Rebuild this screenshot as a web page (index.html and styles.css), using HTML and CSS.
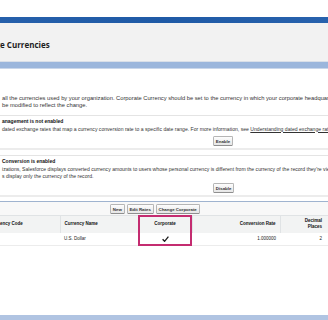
FILE: index.html
```html
<!DOCTYPE html>
<html>
  <head>
    <title>Manage Currencies</title>
    <meta name="viewport" content="width=device-width, initial-scale=1" />
    <link rel="stylesheet" href="styles.css">
  </head>
  <body>
    <div class="page">
      <div class="top-band"></div>
      <div class="title-bar">
        <h1>Manage Currencies</h1>
      </div>
      <div class="low-band"></div>

      <p class="intro">
        all the currencies used by your organization. Corporate Currency should be set to the currency in which your corporate headquarters reports revenue. If your corporate currency changes, the exchange rates should<br />
        be modified to reflect the change.
      </p>

      <div class="section">
        <h2>anagement is not enabled</h2>
        <p>dated exchange rates that map a currency conversion rate to a specific date range. For more information, see <a href="#">Understanding dated exchange rates</a>.</p>
        <div class="actions"><button class="btn">Enable</button></div>
      </div>

      <div class="section">
        <h2>Conversion is enabled</h2>
        <p>izations, Salesforce displays converted currency amounts to users whose personal currency is different from the currency of the record they're viewing.<br />
        s display only the currency of the record.</p>
        <div class="actions"><button class="btn">Disable</button></div>
      </div>

      <div class="list">
        <div class="list-buttons">
          <button class="btn">New</button>
          <button class="btn">Edit Rates</button>
          <button class="btn">Change Corporate</button>
        </div>
        <table>
          <thead>
            <tr>
              <th class="col-code">ency Code</th>
              <th class="col-name">Currency Name</th>
              <th class="col-corp">Corporate</th>
              <th class="col-rate">Conversion Rate</th>
              <th class="col-dec">Decimal<br />Places</th>
            </tr>
          </thead>
          <tbody>
            <tr>
              <td class="col-code"></td>
              <td class="col-name">U.S. Dollar</td>
              <td class="col-corp">
                <svg class="check" width="7" height="6" viewBox="0 0 7 6"><path d="M0.6 3.2 L2.6 5.3 L6.4 0.6" fill="none" stroke="#1a1a1a" stroke-width="1.3"/></svg>
              </td>
              <td class="col-rate">1.000000</td>
              <td class="col-dec">2</td>
            </tr>
          </tbody>
        </table>
        <div class="highlight"></div>
      </div>

      <div class="bottom-band"></div>
    </div>
  </body>
</html>
```

FILE: styles.css
```css
body {
  margin: 0;
  padding: 0;
  background: #fff;
  color: #222;
  font-family: "Liberation Sans", Arial, sans-serif;
  overflow: hidden;
}

.page {
  height: 320px;
  display: flex;
  flex-direction: column;
  overflow: hidden;
}

.top-band {
  margin-top: 17px;
  height: 6px;
  background: linear-gradient(to right, #2660ab, #1f5aa6 50%, #2862ad);
}

.title-bar {
  height: 39px;
  background: #f2f2f2;
  border-bottom: 1px solid #d9dfe8;
  box-sizing: border-box;
}

h1 {
  margin: 17px 0 0 -27px;
  font-family: "Open Sans", "Liberation Sans", sans-serif;
  font-size: 8px;
  line-height: 10px;
  font-weight: 700;
  color: #1e1e1e;
  white-space: nowrap;
}

.low-band {
  height: 6px;
  background: #9bb6dc;
  border-bottom: 1px solid #c9d6ea;
}

p,
h2 {
  margin: 0;
  padding-left: 2px;
  font-size: 5.1px;
  line-height: 7px;
  white-space: nowrap;
}

.intro {
  margin-top: 26px;
  font-size: 5.75px;
  color: #333;
}

.section {
  margin-top: 6px;
  padding: 1.5px 0 2px;
  border-top: 1px solid #e4e4e4;
  border-bottom: 2px solid #ececec;
}

.section + .section {
  margin-top: 5px;
}

.section h2 {
  font-size: 5px;
  font-weight: 700;
  color: #111;
}

.section p {
  margin-top: 1px;
  color: #333;
}

.section a {
  color: #333;
}

.actions {
  display: flex;
  padding-left: 213px;
  margin-top: 3.5px;
}

.btn {
  font-family: "Liberation Sans", Arial, sans-serif;
  font-size: 4.4px;
  font-weight: 700;
  line-height: 5px;
  color: #333;
  padding: 1.5px 1.8px;
  margin: 0;
  border: 1px solid #b5b5b5;
  border-bottom-color: #8f8f8f;
  border-radius: 1.5px;
  background: linear-gradient(#fdfdfd, #e6e6e6);
  cursor: pointer;
}

.list {
  position: relative;
  margin-top: 4px;
  border-top: 1px solid #9fb3cf;
}

.list-buttons {
  display: flex;
  gap: 2px;
  padding: 2px 0 1px 110px;
  background: #f8f8f8;
}

table {
  width: 328px;
  border-collapse: collapse;
  table-layout: fixed;
  font-size: 4.5px;
}

th,
td {
  box-sizing: border-box;
  padding: 0;
}

th {
  background: #f2f3f3;
  font-weight: 700;
  color: #111;
  height: 17px;
  line-height: 6px;
  border-top: 1px solid #e0e3e5;
  border-left: 1px solid #e0e3e5;
}

td {
  height: 13px;
  color: #222;
  border-bottom: 1px solid #ececec;
}

.col-code {
  width: 60px;
  text-align: left;
  border-left: none;
}

.col-name {
  width: 78px;
  text-align: left;
  padding-left: 4px;
}

.col-corp {
  width: 54px;
  text-align: center;
}

.check {
  display: block;
  margin: 0 auto;
}

.col-rate {
  width: 88px;
  text-align: right;
  padding-right: 4px;
}

.col-dec {
  text-align: right;
  padding-right: 6px;
}

.highlight {
  position: absolute;
  left: 138px;
  top: 13px;
  width: 54px;
  height: 31px;
  border: 2px solid #c42c70;
  box-sizing: border-box;
  pointer-events: none;
}

.bottom-band {
  margin-top: auto;
  height: 5px;
  background: #b0c4e2;
}
```
